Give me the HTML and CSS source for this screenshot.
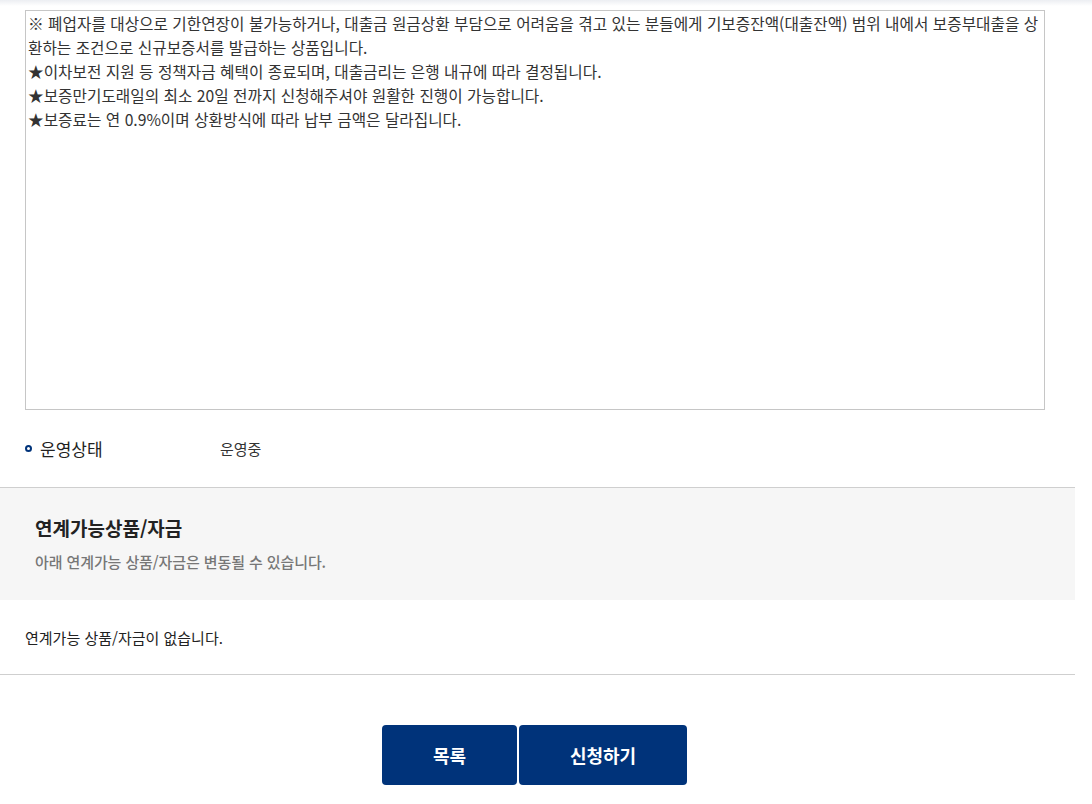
FILE: index.html
```html
<!DOCTYPE html>
<html lang="ko">
<head>
<meta charset="utf-8">
<title>상품 상세</title>
<link rel="stylesheet" href="styles.css">
</head>
<body>
<div class="page">
  <div class="topshade"></div>
  <div class="desc">
    <div class="desc-line">※ 폐업자를 대상으로 기한연장이 불가능하거나, 대출금 원금상환 부담으로 어려움을 겪고 있는 분들에게 기보증잔액(대출잔액) 범위 내에서 보증부대출을 상</div>
    <div class="desc-line">환하는 조건으로 신규보증서를 발급하는 상품입니다.</div>
    <div class="desc-line">★이차보전 지원 등 정책자금 혜택이 종료되며, 대출금리는 은행 내규에 따라 결정됩니다.</div>
    <div class="desc-line">★보증만기도래일의 최소 20일 전까지 신청해주셔야 원활한 진행이 가능합니다.</div>
    <div class="desc-line">★보증료는 연 0.9%이며 상환방식에 따라 납부 금액은 달라집니다.</div>
  </div>
  <div class="status">
    <span class="dot"></span>
    <span class="status-label">운영상태</span>
    <span class="status-value">운영중</span>
  </div>
  <div class="linked-head">
    <h3 class="linked-title">연계가능상품/자금</h3>
    <p class="linked-sub">아래 연계가능 상품/자금은 변동될 수 있습니다.</p>
  </div>
  <div class="linked-body">연계가능 상품/자금이 없습니다.</div>
  <div class="buttons">
    <button class="btn btn-list">목록</button>
    <button class="btn btn-apply">신청하기</button>
  </div>
</div>
</body>
</html>
```

FILE: styles.css
```css
html, body {
  margin: 0;
  padding: 0;
  background: #fff;
}
body {
  font-family: "Noto Sans CJK KR", "Noto Sans", sans-serif;
  color: #222;
}
.page {
  width: 1075px;
}
.topshade {
  height: 10px;
  background: linear-gradient(#eceef2 0px, #fff 6px);
  width: 1092px;
}
.desc {
  margin-left: 25px;
  width: 1020px;
  height: 400px;
  box-sizing: border-box;
  border: 1px solid #c6c6c6;
  padding: 1px 2px;
  font-size: 15.7px;
  line-height: 24px;
  color: #333;
}
.desc-line {
  white-space: nowrap;
}
.status {
  height: 77px;
  display: flex;
  align-items: center;
  padding-left: 25px;
}
.dot {
  width: 7px;
  height: 7px;
  box-sizing: border-box;
  border: 2px solid #00337a;
  border-radius: 50%;
  flex: none;
}
.status-label {
  margin-left: 8px;
  width: 180px;
  font-size: 17px;
  font-weight: 400;
  color: #222;
}
.status-value {
  font-size: 15px;
  color: #333;
}
.linked-head {
  border-top: 1px solid #cfcfcf;
  background: #f6f6f6;
  height: 112px;
  padding-left: 35px;
}
.linked-title {
  margin: 0;
  padding-top: 27px;
  font-size: 19px;
  line-height: 26px;
  font-weight: 700;
  color: #222;
}
.linked-sub {
  margin: 11px 0 0;
  font-size: 15px;
  line-height: 20px;
  font-weight: 500;
  color: #777;
  letter-spacing: -0.1px;
}
.linked-body {
  height: 74px;
  display: flex;
  align-items: center;
  padding-left: 25px;
  border-bottom: 1px solid #cfcfcf;
  font-size: 15px;
  font-weight: 400;
  color: #222;
}
.buttons {
  display: flex;
  justify-content: center;
  gap: 2px;
  margin-top: 50px;
  padding-right: 6px;
}
.btn {
  height: 60px;
  border: none;
  border-radius: 4px;
  background: #00337a;
  color: #fff;
  font-family: "Noto Sans CJK KR", "Noto Sans", sans-serif;
  font-size: 18px;
  font-weight: 700;
  padding: 0;
  cursor: pointer;
}
.btn-list {
  width: 135px;
}
.btn-apply {
  width: 168px;
}
```
